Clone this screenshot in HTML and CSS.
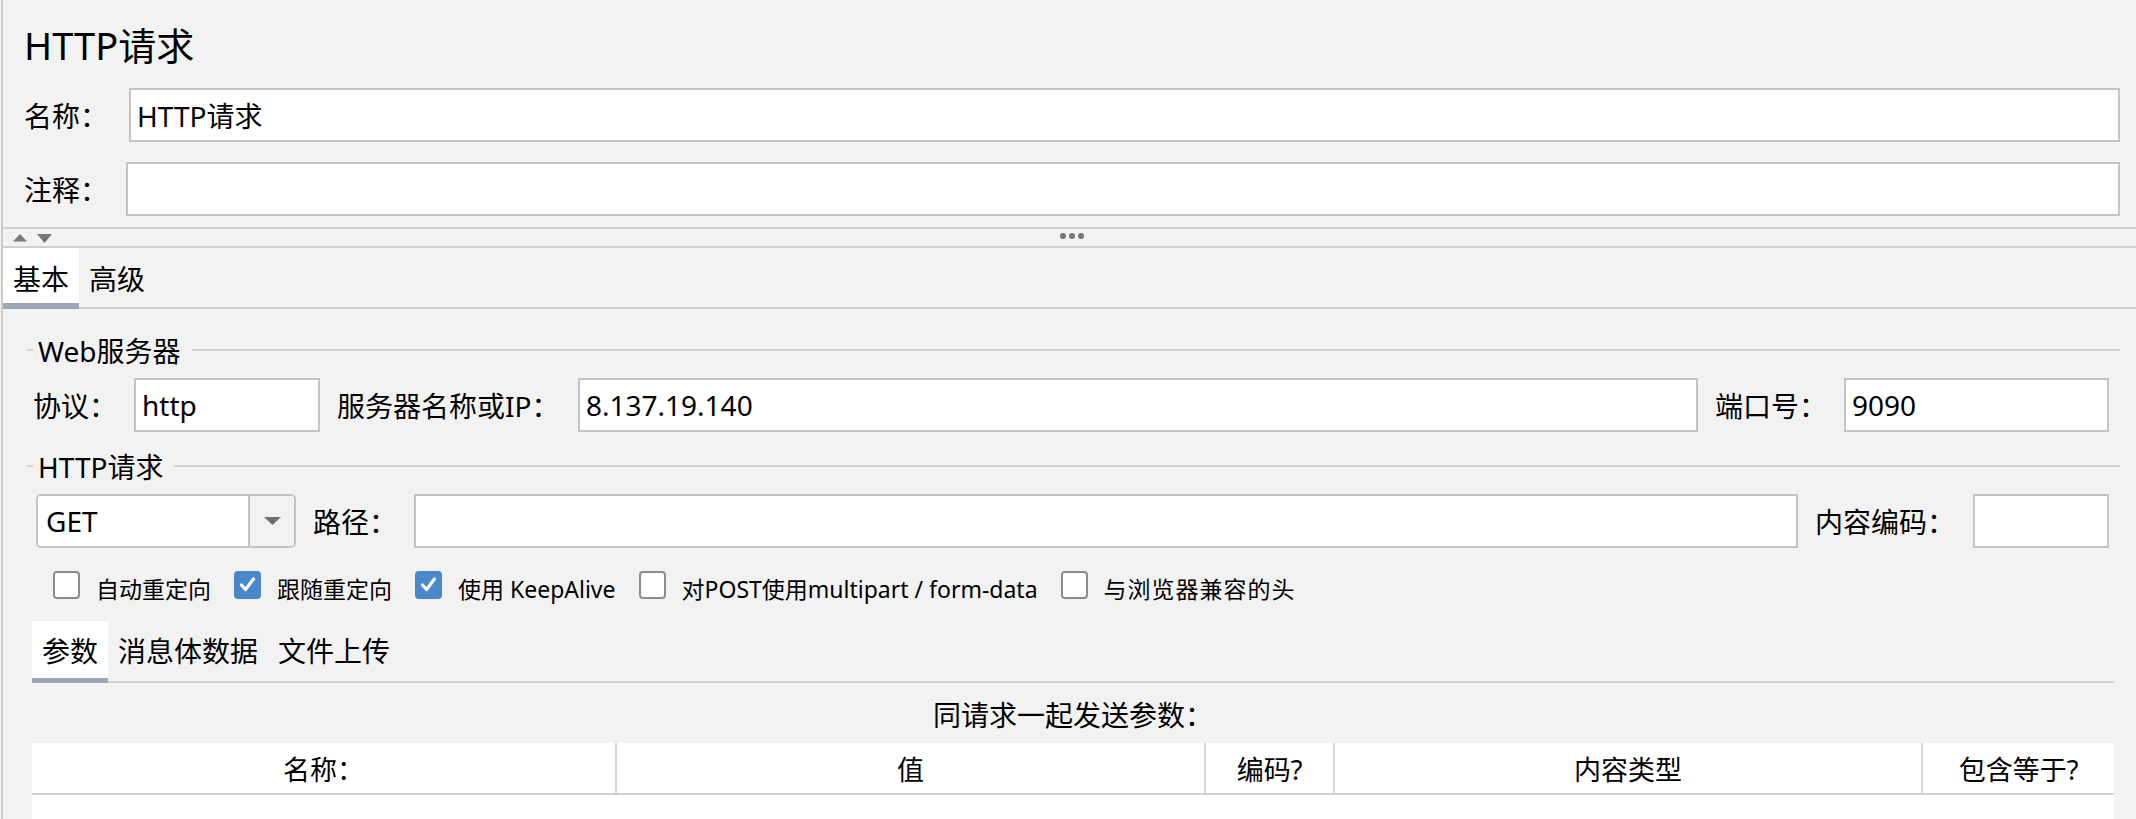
FILE: index.html
```html
<!DOCTYPE html>
<html lang="zh-CN">
<head>
    <meta charset="UTF-8">
    <title>HTTP请求</title>
    <link rel="stylesheet" href="styles.css">
</head>
<body>
<div class="page">
    <div class="head">
        <h1 class="title">HTTP请求</h1>
        <div class="head-row">
            <label class="head-label">名称：</label>
            <input class="text-box" type="text" value="HTTP请求">
        </div>
        <div class="head-row">
            <label class="head-label short">注释：</label>
            <input class="text-box" type="text" value="">
        </div>
    </div>

    <div class="splitter">
        <svg class="split-arrows" width="42" height="10" viewBox="0 0 42 10">
            <polygon points="0,7.5 7,0 14,7.5" fill="#777"/>
            <polygon points="24,0 39,0 31.5,9" fill="#777"/>
        </svg>
        <svg class="split-dots" width="24" height="6" viewBox="0 0 24 6">
            <circle cx="3" cy="3" r="3" fill="#777"/>
            <circle cx="12" cy="3" r="3" fill="#777"/>
            <circle cx="21" cy="3" r="3" fill="#777"/>
        </svg>
        <span></span>
    </div>

    <div class="tabs">
        <div class="tab active">基本</div>
        <div class="tab">高级</div>
    </div>

    <div class="panel">
        <div class="group-title"><span>Web服务器</span></div>
        <div class="form-row">
            <label class="lbl lbl-proto">协议：</label>
            <input class="text-box box-proto" type="text" value="http">
            <label class="lbl lbl-server">服务器名称或IP：</label>
            <input class="text-box grow" type="text" value="8.137.19.140">
            <label class="lbl lbl-port">端口号：</label>
            <input class="text-box box-port" type="text" value="9090">
        </div>

        <div class="group-title second"><span>HTTP请求</span></div>
        <div class="form-row">
            <div class="combo">
                <span class="combo-value">GET</span>
                <span class="combo-button">
                    <svg width="17" height="8" viewBox="0 0 17 8"><polygon points="0,0 17,0 8.5,8" fill="#6e6e6e"/></svg>
                </span>
            </div>
            <label class="lbl lbl-path">路径：</label>
            <input class="text-box grow" type="text" value="">
            <label class="lbl lbl-enc">内容编码：</label>
            <input class="text-box box-enc" type="text" value="">
        </div>

        <div class="checks">
            <div class="check-item">
                <span class="check-box"></span>
                <span class="check-label">自动重定向</span>
            </div>
            <div class="check-item">
                <span class="check-box checked">
                    <svg width="27" height="27" viewBox="0 0 27 27"><path d="M7.5 14 L11.5 18.5 L19.5 8" fill="none" stroke="#fff" stroke-width="3.2" stroke-linecap="round" stroke-linejoin="round"/></svg>
                </span>
                <span class="check-label">跟随重定向</span>
            </div>
            <div class="check-item">
                <span class="check-box checked">
                    <svg width="27" height="27" viewBox="0 0 27 27"><path d="M7.5 14 L11.5 18.5 L19.5 8" fill="none" stroke="#fff" stroke-width="3.2" stroke-linecap="round" stroke-linejoin="round"/></svg>
                </span>
                <span class="check-label">使用 KeepAlive</span>
            </div>
            <div class="check-item">
                <span class="check-box"></span>
                <span class="check-label">对POST使用multipart / form-data</span>
            </div>
            <div class="check-item">
                <span class="check-box"></span>
                <span class="check-label wide">与浏览器兼容的头</span>
            </div>
        </div>

        <div class="params">
            <div class="subtabs">
                <div class="tab active">参数</div>
                <div class="tab">消息体数据</div>
                <div class="tab">文件上传</div>
            </div>
            <div class="caption">同请求一起发送参数：</div>
            <div class="table">
                <div class="table-head">
                    <div class="th">名称：</div>
                    <div class="th">值</div>
                    <div class="th">编码?</div>
                    <div class="th">内容类型</div>
                    <div class="th">包含等于?</div>
                </div>
                <div class="table-body"></div>
            </div>
        </div>
    </div>
</div>
</body>
</html>
```

FILE: styles.css
```css
*
{
    box-sizing: border-box;
}

html, body
{
    margin: 0;
    height: 819px;
    overflow: hidden;
}

body
{
    background-color: #f2f2f2;
    font-family: "Noto Sans", "Noto Sans CJK SC", sans-serif;
    font-size: 28px;
    color: #000;
}

.page
{
    margin-left: 1px;
    border-left: 2px solid #cbcbcb;
    height: 819px;
}

/* top part: title, name, comment */
.head
{
    padding: 22px 16px 11px 21px;
}

.title
{
    margin: 0 0 20px 0;
    font-size: 38px;
    font-weight: normal;
    line-height: 46px;
}

.head-row
{
    display: flex;
    align-items: center;
}

.head-row + .head-row
{
    margin-top: 20px;
}

.head-label
{
    margin-right: 21px;
    white-space: nowrap;
}

.head-label.short
{
    margin-right: 18px;
}

.text-box
{
    height: 54px;
    border: 2px solid #c4c4c4;
    background-color: #fff;
    padding: 0 6px;
    font: inherit;
    color: #000;
    outline: none;
    min-width: 0;
    flex: 1;
}

/* splitter bar */
.splitter
{
    height: 21px;
    border-top: 2px solid #d0d0d0;
    border-bottom: 2px solid #d0d0d0;
    display: grid;
    grid-template-columns: 1fr auto 1fr;
    align-items: center;
}

.split-arrows
{
    margin: 2px 0 0 10px;
    display: block;
}

.split-dots
{
    display: block;
    margin: 0 0 3px 5px;
}

/* tabs */
.tabs, .subtabs
{
    display: flex;
    height: 61px;
    border-bottom: 2px solid #d0d0d0;
}

.tab
{
    height: 61px;
    margin-bottom: -2px;
    padding: 0 10px;
    display: flex;
    align-items: center;
    line-height: 1;
}

.tab.active
{
    background-color: #fff;
    box-shadow: inset 0 -6px #9ca7b8;
}

.subtabs
{
    height: 62px;
}

.subtabs .tab
{
    height: 62px;
    padding-bottom: 2px;
}

.subtabs .tab.active
{
    box-shadow: inset 0 -5px #9ca7b8;
}

/* main panel */
.panel
{
    padding: 21px 16px 0 24px;
}

.group-title
{
    display: flex;
    align-items: center;
    height: 40px;
}

.group-title::before
{
    content: "";
    width: 6px;
    border-top: 2px solid #d0d0d0;
}

.group-title::after
{
    content: "";
    flex: 1;
    border-top: 2px solid #d0d0d0;
}

.group-title span
{
    margin: 0 11px 0 5px;
}

.group-title.second
{
    margin-top: 14px;
}

.form-row
{
    display: flex;
    align-items: center;
    margin-top: 8px;
    padding: 0 11px 0 6px;
}

.lbl
{
    white-space: nowrap;
    flex: none;
}

.lbl + .text-box
{
    flex: none;
}

.lbl + .grow
{
    flex: 1;
}

.text-box + .lbl,
.combo + .lbl
{
    margin-left: 17px;
}

.lbl-proto { width: 101px; }
.lbl-server { width: 241px; }
.lbl-port { width: 129px; }
.lbl-path { width: 101px; }
.lbl-enc { width: 158px; }

.box-proto { width: 186px; }
.box-port { width: 265px; }
.box-enc { width: 136px; }

.combo
{
    display: flex;
    flex: none;
    width: 260px;
    height: 54px;
    margin-left: 3px;
    border: 2px solid #c4c4c4;
    border-radius: 5px;
    overflow: hidden;
}

.combo-value
{
    flex: 1;
    background-color: #fff;
    display: flex;
    align-items: center;
    padding-left: 8px;
    border-right: 2px solid #c4c4c4;
}

.combo-button
{
    width: 44px;
    display: flex;
    align-items: center;
    justify-content: center;
    background-color: #f2f2f2;
}

.combo-button svg
{
    display: block;
}

/* checkboxes */
.checks
{
    display: flex;
    align-items: center;
    height: 40px;
    margin-top: 17px;
    padding-left: 26px;
    font-size: 23px;
}

.check-item
{
    display: flex;
    align-items: center;
    margin-right: 23px;
}

.check-box
{
    width: 27px;
    height: 28px;
    border: 2px solid #8c8c8c;
    border-radius: 4px;
    background-color: #fff;
    margin-right: 16px;
    position: relative;
}

.check-box.checked
{
    border-color: #4b88ca;
    background-color: #4b88ca;
}

.check-box svg
{
    position: absolute;
    left: -2px;
    top: -2px;
}

.check-label
{
    padding-top: 5px;
    white-space: nowrap;
}

.check-label.wide
{
    letter-spacing: 1px;
}

/* parameters */
.params
{
    margin: 16px 6px 0 5px;
}

.caption
{
    margin-top: 14px;
    height: 36px;
    line-height: 36px;
    text-align: center;
}

.table
{
    margin-top: 10px;
    background-color: #fff;
}

.table-head
{
    display: grid;
    grid-template-columns: 585px 589px 129px 588px 1fr;
    height: 52px;
    border-bottom: 2px solid #d0d0d0;
    font-size: 27px;
}

.th
{
    display: flex;
    align-items: center;
    justify-content: center;
    border-right: 2px solid #d8d8d8;
}

.th:last-child
{
    border-right: none;
}

.table-body
{
    height: 60px;
}
```
